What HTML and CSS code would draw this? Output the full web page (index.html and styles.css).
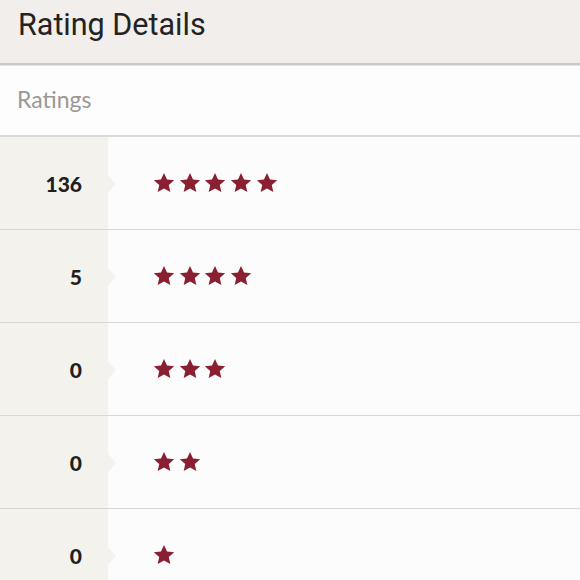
FILE: index.html
```html
<!DOCTYPE html>
<html>
<head>
<meta charset="utf-8">
<link rel="stylesheet" href="styles.css">
</head>
<body>
<svg width="0" height="0" class="defs">
  <defs>
    <symbol id="star" viewBox="0 0 24 24">
      <path d="M12 1l3.3 7.1 7.8.8-5.9 5.3 1.7 7.7L12 18l-6.9 3.9 1.7-7.7L.9 8.9l7.8-.8z"/>
    </symbol>
  </defs>
</svg>
<header class="topbar"><h1 class="title">Rating Details</h1></header>
<section class="section-head">Ratings</section>
<div class="rows">
  <div class="row"><div class="count">136</div><div class="stars">
    <svg class="star"><use href="#star"/></svg><svg class="star"><use href="#star"/></svg><svg class="star"><use href="#star"/></svg><svg class="star"><use href="#star"/></svg><svg class="star"><use href="#star"/></svg>
  </div></div>
  <div class="row"><div class="count">5</div><div class="stars">
    <svg class="star"><use href="#star"/></svg><svg class="star"><use href="#star"/></svg><svg class="star"><use href="#star"/></svg><svg class="star"><use href="#star"/></svg>
  </div></div>
  <div class="row"><div class="count">0</div><div class="stars">
    <svg class="star"><use href="#star"/></svg><svg class="star"><use href="#star"/></svg><svg class="star"><use href="#star"/></svg>
  </div></div>
  <div class="row"><div class="count">0</div><div class="stars">
    <svg class="star"><use href="#star"/></svg><svg class="star"><use href="#star"/></svg>
  </div></div>
  <div class="row"><div class="count">0</div><div class="stars">
    <svg class="star"><use href="#star"/></svg>
  </div></div>
</div>
</body>
</html>
```
FILE: styles.css
```css
html, body {
  margin: 0;
  padding: 0;
  background: #fcfcfc;
  width: 580px;
  height: 580px;
  overflow: hidden;
}
.defs { position: absolute; }
.topbar {
  height: 63px;
  background: #f1eeeb;
  border-bottom: 2px solid #cdc9c4;
  box-shadow: 0 1px 0 #e4e1de;
  display: flex;
  align-items: center;
  padding-left: 18px;
}
.title {
  margin: 0;
  font-family: Roboto, "Liberation Sans", sans-serif;
  font-weight: 400;
  font-size: 30.5px;
  color: #232323;
  padding-bottom: 14px;
}
.section-head {
  height: 71px;
  margin-top: 1px;
  border-bottom: 2px solid #dcdad7;
  display: flex;
  align-items: center;
  padding-left: 17px;
  padding-bottom: 4px;
  box-sizing: border-box;
  font-family: Lato, "Open Sans", sans-serif;
  font-size: 23px;
  color: #9a9894;
  background: #fdfdfd;
}
.rows {
  display: flex;
  flex-direction: column;
}
.row {
  height: 92px;
  border-bottom: 1px solid #d9d7d4;
  display: flex;
  align-items: stretch;
}
.count {
  width: 108px;
  box-sizing: border-box;
  background: #f4f2ed;
  display: flex;
  align-items: center;
  justify-content: flex-end;
  padding-right: 26px;
  font-family: Lato, "DejaVu Sans", sans-serif;
  font-weight: 900;
  font-size: 21px;
  color: #1f1f1f;
  position: relative;
}
.count::after {
  content: "";
  position: absolute;
  right: -8px;
  top: 50%;
  margin-top: -8px;
  border-left: 8px solid #f4f2ed;
  border-top: 9px solid transparent;
  border-bottom: 9px solid transparent;
}
.stars {
  display: flex;
  align-items: center;
  gap: 3.7px;
  padding-left: 45px;
}
.star {
  width: 22px;
  height: 22px;
  fill: #8a1f31;
}
```
